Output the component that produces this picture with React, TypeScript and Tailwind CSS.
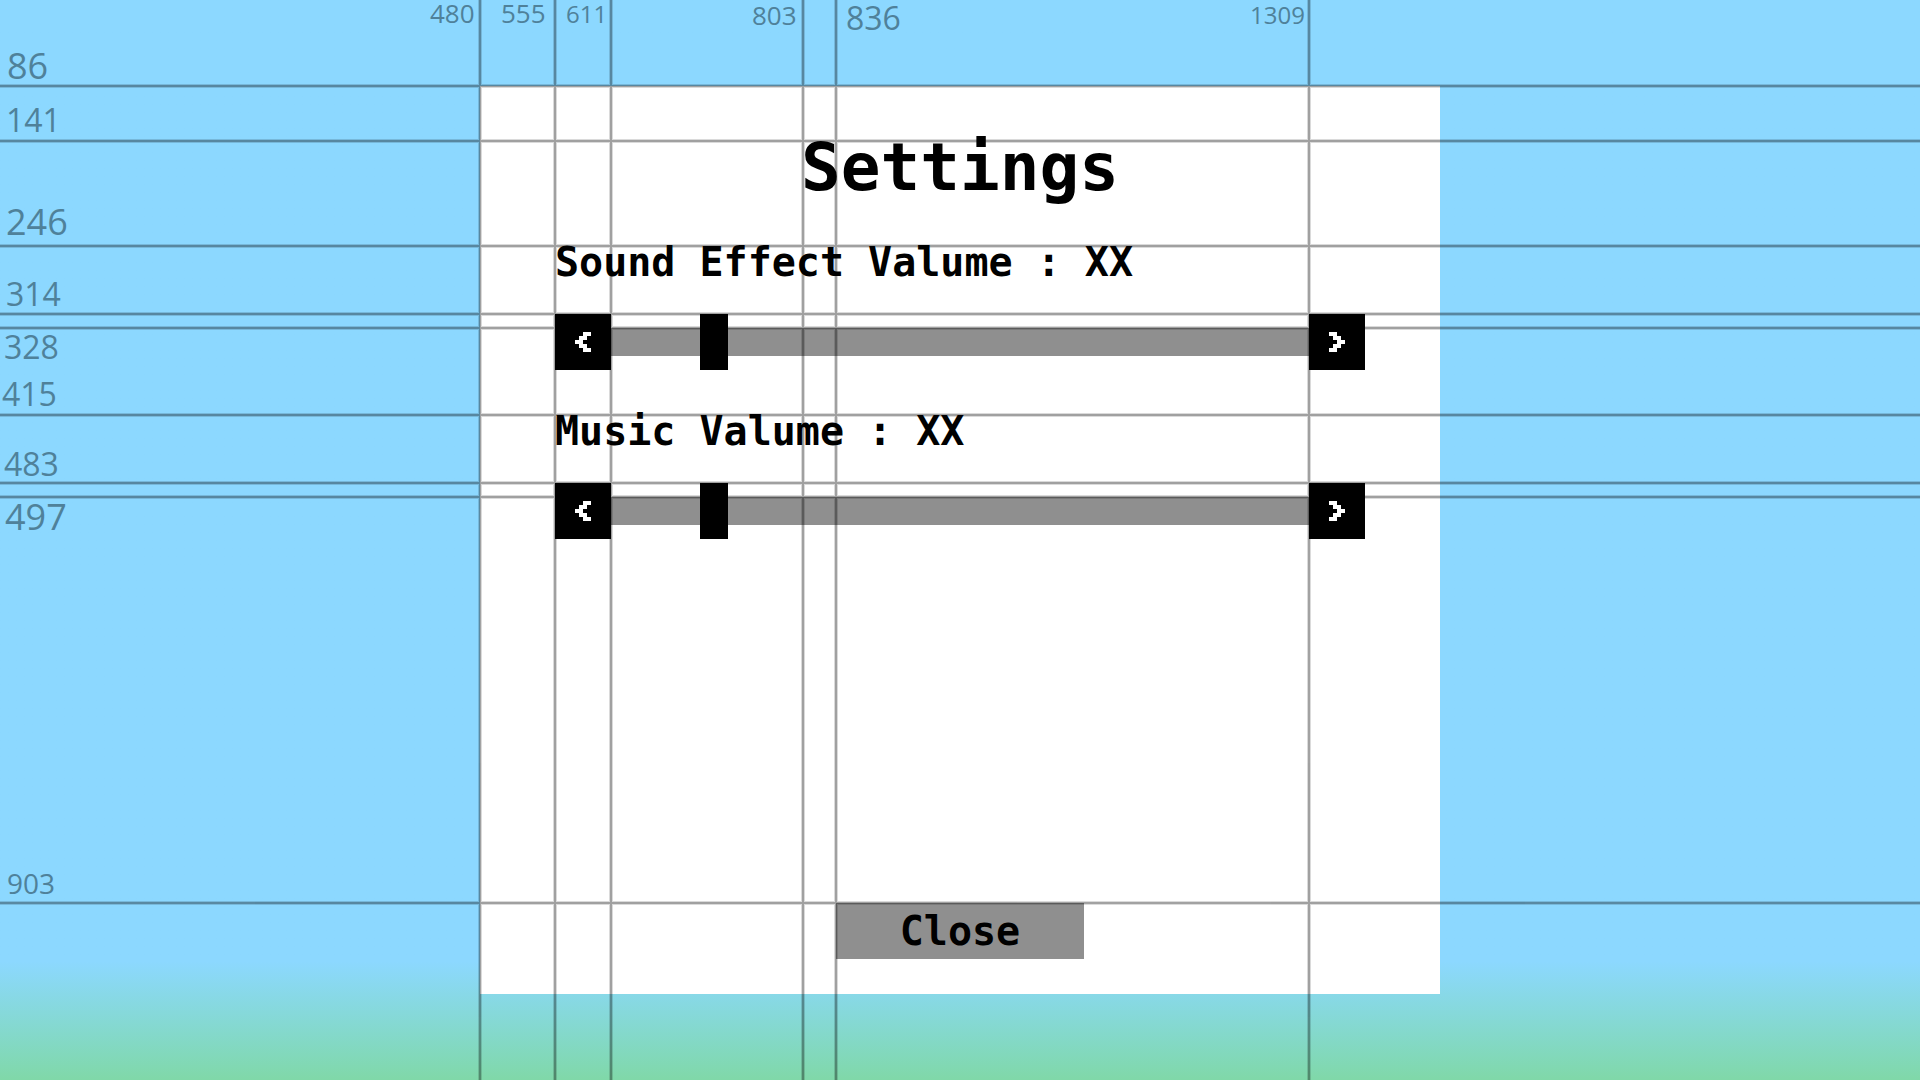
import { useState } from "react";

const columns = [480, 555, 611, 803, 836, 1309];
const rows = [86, 141, 246, 314, 328, 415, 483, 497, 903];

const notes = [
  { text: "86", place: "left-[7px] top-[48px]", size: "text-[36px]" },
  { text: "141", place: "left-[6px] top-[104px]", size: "text-[32px]" },
  { text: "246", place: "left-[6px] top-[204px]", size: "text-[36px]" },
  { text: "314", place: "left-[6px] top-[278px]", size: "text-[32px]" },
  { text: "328", place: "left-[4px] top-[331px]", size: "text-[32px]" },
  { text: "415", place: "left-[2px] top-[378px]", size: "text-[32px]" },
  { text: "483", place: "left-[4px] top-[448px]", size: "text-[32px]" },
  { text: "497", place: "left-[5px] top-[499px]", size: "text-[36px]" },
  { text: "903", place: "left-[7px] top-[869px]", size: "text-[28px]" },
  { text: "480", place: "left-[430px] top-0", size: "text-[26px]" },
  { text: "555", place: "left-[501px] top-0", size: "text-[26px]" },
  { text: "611", place: "left-[566px] top-[2px]", size: "text-[24px]" },
  { text: "803", place: "left-[752px] top-[2px]", size: "text-[26px]" },
  { text: "836", place: "left-[846px] top-[2px]", size: "text-[32px]" },
  { text: "1309", place: "left-[1250px] top-[3px]", size: "text-[24px]" },
];

function GuideLines({ thickness, opacity }: { thickness: number; opacity: number }) {
  return (
    <g opacity={opacity}>
      {columns.map((x) => (
        <rect key={x} x={x - thickness / 2} y="0" width={thickness} height="100%" />
      ))}
      {rows.map((y) => (
        <rect key={y} x="0" y={y - thickness / 2} width="100%" height={thickness} />
      ))}
    </g>
  );
}

function Guides() {
  return (
    <div className="pointer-events-none absolute inset-0">
      <svg className="absolute inset-0 h-full w-full" shapeRendering="crispEdges" aria-hidden="true">
        <GuideLines thickness={4} opacity={0.14} />
        <GuideLines thickness={2} opacity={0.26} />
      </svg>
      {notes.map((note) => (
        <span
          key={note.text}
          className={`absolute font-['Open_Sans','Noto_Sans',sans-serif] leading-none font-normal text-[#4f819a] ${note.place} ${note.size}`}
        >
          {note.text}
        </span>
      ))}
    </div>
  );
}

function Chevron({ direction }: { direction: "left" | "right" }) {
  return (
    <svg
      className="h-5 w-4"
      viewBox="0 0 4 5"
      fill="currentColor"
      shapeRendering="crispEdges"
      aria-hidden="true"
    >
      {direction === "left" ? (
        <path d="M2 0h2v1h-1v1h-1v1h1v1h1v1h-2v-1h-1v-1h-1v-1h1v-1h1z" />
      ) : (
        <path d="M0 0h2v1h1v1h1v1h-1v1h-1v1h-2v-1h1v-1h1v-1h-1v-1h-1z" />
      )}
    </svg>
  );
}

const MAX_LEVEL = 15;

function VolumeControl({ id, label }: { id: string; label: string }) {
  const [value, setValue] = useState(2);
  const step = (by: number) => setValue((v) => Math.min(MAX_LEVEL, Math.max(0, v + by)));
  const stepClass = "flex size-14 shrink-0 items-center justify-center bg-black text-white";

  return (
    <div className="flex flex-col gap-7">
      <label htmlFor={id} className="text-[40px] leading-12 whitespace-nowrap">
        {label}
      </label>
      <div className="flex">
        <button type="button" aria-label={`Decrease ${id}`} onClick={() => step(-1)} className={stepClass}>
          <Chevron direction="left" />
        </button>
        <input
          id={id}
          type="range"
          min={0}
          max={MAX_LEVEL}
          value={value}
          onChange={(e) => setValue(Number(e.target.value))}
          className="h-14 min-w-0 flex-1 appearance-none bg-transparent [&::-webkit-slider-runnable-track]:h-7 [&::-webkit-slider-runnable-track]:bg-[#8f8f8f] [&::-webkit-slider-thumb]:-mt-3.5 [&::-webkit-slider-thumb]:h-14 [&::-webkit-slider-thumb]:w-7 [&::-webkit-slider-thumb]:appearance-none [&::-webkit-slider-thumb]:bg-black"
        />
        <button type="button" aria-label={`Increase ${id}`} onClick={() => step(1)} className={stepClass}>
          <Chevron direction="right" />
        </button>
      </div>
    </div>
  );
}

export default function App() {
  return (
    <div className="relative flex min-h-screen justify-center bg-linear-to-b from-[#8cd8ff] from-89% to-[#80d8a8] py-[86px] font-['DejaVu_Sans_Mono',monospace] font-bold text-black">
      <main className="flex w-1/2 flex-col items-stretch bg-white px-[75px] pt-10 pb-[35px]">
        <h1 className="text-center text-[66px] leading-[84px]">Settings</h1>
        <div className="mt-7 flex flex-col gap-[37px]">
          <VolumeControl id="sound-effect-volume" label="Sound Effect Valume : XX" />
          <VolumeControl id="music-volume" label="Music Valume : XX" />
        </div>
        <button type="button" className="mt-auto h-14 w-62 self-center bg-[#8f8f8f] text-[40px] leading-none">
          Close
        </button>
      </main>
      <Guides />
    </div>
  );
}
